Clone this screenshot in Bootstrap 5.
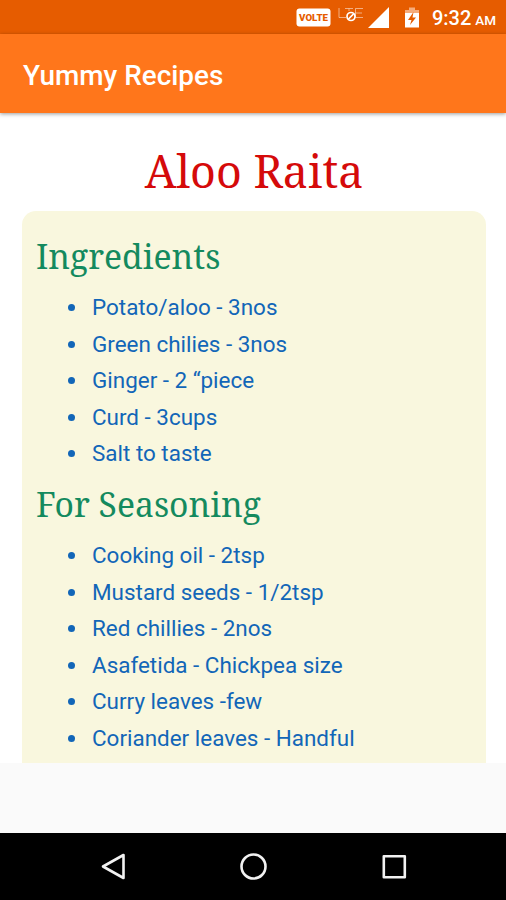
<!DOCTYPE html>
<html lang="en">
<head>
<meta charset="utf-8">
<meta name="viewport" content="width=device-width, initial-scale=1">
<title>Yummy Recipes</title>
<link href="https://cdn.jsdelivr.net/npm/bootstrap@5.3.0/dist/css/bootstrap.min.css" rel="stylesheet">
<style>
body{font-family:Roboto,"Liberation Sans",sans-serif;background:#fafafa;height:900px;overflow:hidden}
.status-bar{height:34px;background:#e65c00;padding-right:10px;flex:none}
.clock{font-size:20px;line-height:34px;font-weight:500;white-space:nowrap;padding-top:4px}
.clock span{font-size:13.5px;margin-left:-1px}
.app-bar{height:79px;background:#ff761b;padding:5px 23px 0;box-shadow:0 1px 4px rgba(0,0,0,.4);z-index:1;flex:none}
.app-title{font-size:27.9px;font-weight:500;line-height:1}
.recipe{height:650px;background:#fff;padding:0 20px 0 22px;overflow:hidden;flex:none}
.recipe h1,.recipe h2{font-family:"Noto Serif","Droid Serif","DejaVu Serif Condensed","DejaVu Serif",serif;font-weight:400;white-space:nowrap}
.recipe h1{font-size:44.8px;line-height:60px;color:#d50a0a;padding-top:28px;height:98px}
.sheet{background:#f9f7de;border-radius:14px 14px 0 0;height:560px;padding:22px 14px}
.recipe h2{font-size:33.7px;line-height:46px;color:#148a5e}
.recipe ul{font-size:22.45px;line-height:36.6px;color:#1266b8;padding:10px 0 9px 56px;list-style:none}
.recipe li{position:relative;white-space:nowrap}
.recipe li::before{content:"";position:absolute;left:-24px;top:15px;width:7px;height:7px;border-radius:50%;background:currentColor}
.nav-keys{height:67px;background:#000;flex:none}
</style>
<script src="https://cdn.jsdelivr.net/npm/bootstrap@5.3.0/dist/js/bootstrap.bundle.min.js"></script>
</head>
<body class="d-flex flex-column">
<div class="status-bar d-flex justify-content-end align-items-center text-white">
  <svg width="136" height="34" viewBox="296 0 136 34" aria-hidden="true">
    <rect x="296.500" y="8.500" width="34" height="18" rx="3" fill="#fff"/>
    <text x="299" y="21" font-family="Roboto, sans-serif" font-size="9.500" font-weight="900" fill="#e65c00" textLength="29" lengthAdjust="spacingAndGlyphs">VOLTE</text>
    <g fill="none" stroke="#fff" stroke-opacity=".5" stroke-width="1"><path d="M339 8V17.500H346M345 8.500H353M349 8.500V11M363 8.500H355.500V17.500H363M355.500 13H362"/></g>
    <circle cx="351" cy="16.500" r="4" fill="none" stroke="#fff" stroke-width="1.700"/><path d="M348.500 19L353.500 14" stroke="#fff" stroke-width="1.700"/>
    <path d="M389 7V28H368Z" fill="#fff"/>
    <path d="M405 13V10H409V7.500H415V10H419V13Z" fill="#f5ac7c"/><path d="M405 13H419V27.500H405Z" fill="#fff"/>
    <path d="M413.500 12L408 20H411.500L410 25L416 17.500H412.500Z" fill="#e65c00"/>
  </svg>
  <div class="clock">9:32 <span>AM</span></div>
</div>
<header class="app-bar d-flex align-items-center text-white position-relative"><div class="app-title">Yummy Recipes</div></header>
<main class="recipe">
  <h1 class="text-center m-0">Aloo Raita</h1>
  <section class="sheet">
    <h2 class="m-0">Ingredients</h2>
    <ul class="m-0"><li>Potato/aloo - 3nos</li><li>Green chilies - 3nos</li><li>Ginger - 2 “piece</li><li>Curd - 3cups</li><li>Salt to taste</li></ul>
    <h2 class="m-0">For Seasoning</h2>
    <ul class="m-0"><li>Cooking oil - 2tsp</li><li>Mustard seeds - 1/2tsp</li><li>Red chillies - 2nos</li><li>Asafetida - Chickpea size</li><li>Curry leaves -few</li><li>Coriander leaves - Handful</li></ul>
  </section>
</main>
<nav class="nav-keys mt-auto" aria-label="System navigation">
  <svg width="506" height="67" viewBox="0 833 506 67" fill="none" stroke="#f2f2f2" stroke-width="2.600" stroke-linejoin="round"><path d="M123.500 855V878L103 866.500Z"/><circle cx="253.500" cy="866.500" r="12"/><rect x="383.800" y="856.300" width="21" height="21"/></svg>
</nav>
</body>
</html>
